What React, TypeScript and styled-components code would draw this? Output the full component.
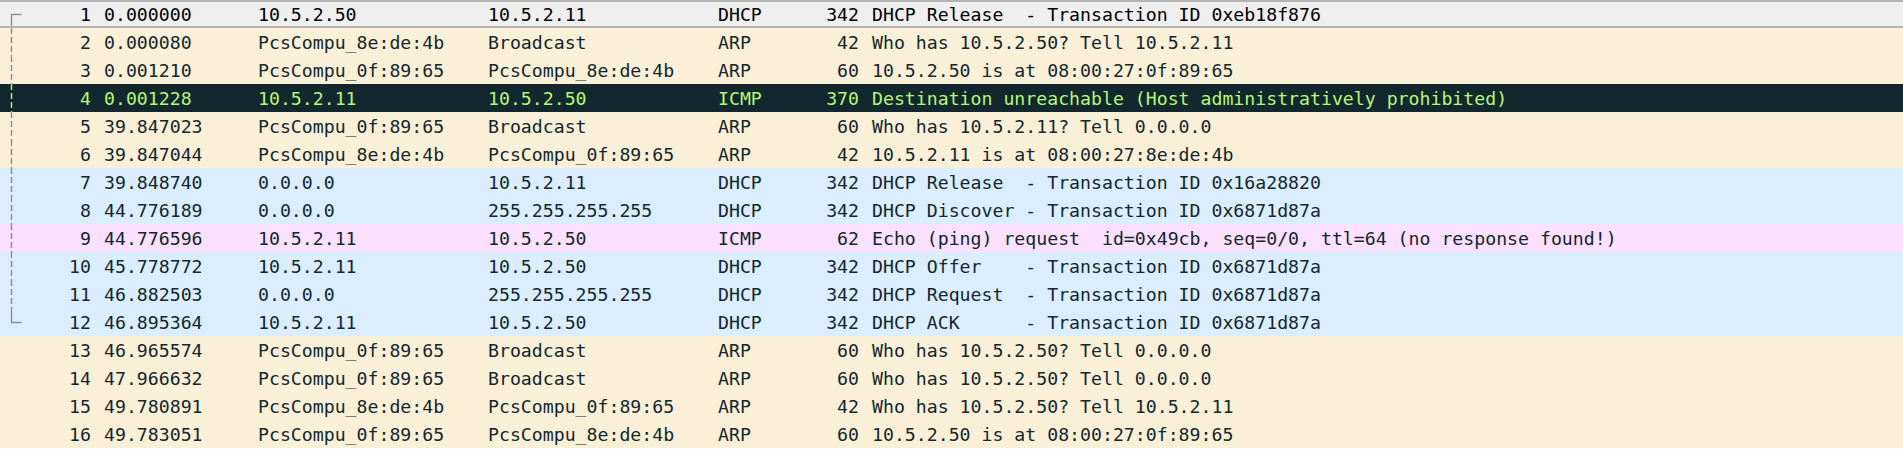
import React from "react";
import styled, { createGlobalStyle } from "styled-components";

const GlobalStyle = createGlobalStyle`
  html, body {
    margin: 0;
    padding: 0;
    background: #ffffff;
  }
`;

type Kind = "arp" | "udp" | "icmp" | "err" | "sel";
type Tree = "start" | "mid" | "end" | "none";

interface IPacket {
  no: number;
  time: string;
  src: string;
  dst: string;
  proto: string;
  len: number;
  info: string;
  kind: Kind;
  tree: Tree;
}

const colors: Record<Kind, { bg: string; fg: string }> = {
  arp: { bg: "#faf0d7", fg: "#12272e" },
  udp: { bg: "#daeeff", fg: "#12272e" },
  icmp: { bg: "#fce0ff", fg: "#12272e" },
  err: { bg: "#12272e", fg: "#b7f774" },
  sel: { bg: "#efefef", fg: "#000000" },
};

const packets: IPacket[] = [
  { no: 1, time: "0.000000", src: "10.5.2.50", dst: "10.5.2.11", proto: "DHCP", len: 342, info: "DHCP Release  - Transaction ID 0xeb18f876", kind: "sel", tree: "start" },
  { no: 2, time: "0.000080", src: "PcsCompu_8e:de:4b", dst: "Broadcast", proto: "ARP", len: 42, info: "Who has 10.5.2.50? Tell 10.5.2.11", kind: "arp", tree: "mid" },
  { no: 3, time: "0.001210", src: "PcsCompu_0f:89:65", dst: "PcsCompu_8e:de:4b", proto: "ARP", len: 60, info: "10.5.2.50 is at 08:00:27:0f:89:65", kind: "arp", tree: "mid" },
  { no: 4, time: "0.001228", src: "10.5.2.11", dst: "10.5.2.50", proto: "ICMP", len: 370, info: "Destination unreachable (Host administratively prohibited)", kind: "err", tree: "mid" },
  { no: 5, time: "39.847023", src: "PcsCompu_0f:89:65", dst: "Broadcast", proto: "ARP", len: 60, info: "Who has 10.5.2.11? Tell 0.0.0.0", kind: "arp", tree: "mid" },
  { no: 6, time: "39.847044", src: "PcsCompu_8e:de:4b", dst: "PcsCompu_0f:89:65", proto: "ARP", len: 42, info: "10.5.2.11 is at 08:00:27:8e:de:4b", kind: "arp", tree: "mid" },
  { no: 7, time: "39.848740", src: "0.0.0.0", dst: "10.5.2.11", proto: "DHCP", len: 342, info: "DHCP Release  - Transaction ID 0x16a28820", kind: "udp", tree: "mid" },
  { no: 8, time: "44.776189", src: "0.0.0.0", dst: "255.255.255.255", proto: "DHCP", len: 342, info: "DHCP Discover - Transaction ID 0x6871d87a", kind: "udp", tree: "mid" },
  { no: 9, time: "44.776596", src: "10.5.2.11", dst: "10.5.2.50", proto: "ICMP", len: 62, info: "Echo (ping) request  id=0x49cb, seq=0/0, ttl=64 (no response found!)", kind: "icmp", tree: "mid" },
  { no: 10, time: "45.778772", src: "10.5.2.11", dst: "10.5.2.50", proto: "DHCP", len: 342, info: "DHCP Offer    - Transaction ID 0x6871d87a", kind: "udp", tree: "mid" },
  { no: 11, time: "46.882503", src: "0.0.0.0", dst: "255.255.255.255", proto: "DHCP", len: 342, info: "DHCP Request  - Transaction ID 0x6871d87a", kind: "udp", tree: "mid" },
  { no: 12, time: "46.895364", src: "10.5.2.11", dst: "10.5.2.50", proto: "DHCP", len: 342, info: "DHCP ACK      - Transaction ID 0x6871d87a", kind: "udp", tree: "end" },
  { no: 13, time: "46.965574", src: "PcsCompu_0f:89:65", dst: "Broadcast", proto: "ARP", len: 60, info: "Who has 10.5.2.50? Tell 0.0.0.0", kind: "arp", tree: "none" },
  { no: 14, time: "47.966632", src: "PcsCompu_0f:89:65", dst: "Broadcast", proto: "ARP", len: 60, info: "Who has 10.5.2.50? Tell 0.0.0.0", kind: "arp", tree: "none" },
  { no: 15, time: "49.780891", src: "PcsCompu_8e:de:4b", dst: "PcsCompu_0f:89:65", proto: "ARP", len: 42, info: "Who has 10.5.2.50? Tell 10.5.2.11", kind: "arp", tree: "none" },
  { no: 16, time: "49.783051", src: "PcsCompu_0f:89:65", dst: "PcsCompu_8e:de:4b", proto: "ARP", len: 60, info: "10.5.2.50 is at 08:00:27:0f:89:65", kind: "arp", tree: "none" },
];

const List = styled.div`
  width: 1903px;
  font-family: "DejaVu Sans Mono", "Liberation Mono", monospace;
  font-size: 18.2px;
`;

const Row = styled.div<{ $kind: Kind }>`
  display: grid;
  grid-template-columns: 97px 154px 230px 230px 88px 66px 1fr;
  height: 28px;
  box-sizing: border-box;
  align-items: center;
  background: ${(p) => colors[p.$kind].bg};
  color: ${(p) => colors[p.$kind].fg};
  ${(p) =>
    p.$kind === "sel" &&
    `
    border-top: 2px solid #b4b4b4;
    border-bottom: 2px solid #b4b4b4;
  `}
`;

const Cell = styled.div<{ $right?: boolean }>`
  padding: 0 6px 0 7px;
  white-space: pre;
  overflow: hidden;
  text-align: ${(p) => (p.$right ? "right" : "left")};
`;

const NoCell = styled.div`
  display: flex;
  align-items: center;
  height: 100%;
  padding-right: 6px;
`;

const TreeSvg = styled.svg`
  flex: none;
  display: block;
`;

const Num = styled.span`
  flex: 1;
  text-align: right;
  white-space: pre;
`;

function TreeMark({ tree, color, sel }: { tree: Tree; color: string; sel: boolean }) {
  const h = sel ? 24 : 28;
  const mid = h / 2 + 0.5;
  return (
    <TreeSvg width="24" height={h} viewBox={`0 0 24 ${h}`}>
      {tree === "start" && (
        <>
          <line x1="11.5" y1={mid} x2="11.5" y2={h + 2} stroke={color} strokeWidth="1.4" />
          <line x1="11" y1={mid} x2="21.5" y2={mid} stroke={color} strokeWidth="1.4" />
        </>
      )}
      {tree === "mid" && (
        <line x1="11.5" y1="0" x2="11.5" y2={h} stroke={color} strokeWidth="1.4" strokeDasharray="6 3" />
      )}
      {tree === "end" && (
        <>
          <line x1="11.5" y1="0" x2="11.5" y2={mid} stroke={color} strokeWidth="1.4" />
          <line x1="11" y1={mid} x2="21.5" y2={mid} stroke={color} strokeWidth="1.4" />
        </>
      )}
    </TreeSvg>
  );
}

export default function App() {
  return (
    <List>
      <GlobalStyle />
      {packets.map((p) => {
        const lineColor = p.kind === "err" ? "#b7f774" : "#8a8a8a";
        return (
          <Row $kind={p.kind} key={p.no}>
            <NoCell>
              <TreeMark tree={p.tree} color={lineColor} sel={p.kind === "sel"} />
              <Num>{p.no}</Num>
            </NoCell>
            <Cell>{p.time}</Cell>
            <Cell>{p.src}</Cell>
            <Cell>{p.dst}</Cell>
            <Cell>{p.proto}</Cell>
            <Cell $right>{p.len}</Cell>
            <Cell>{p.info}</Cell>
          </Row>
        );
      })}
    </List>
  );
}
